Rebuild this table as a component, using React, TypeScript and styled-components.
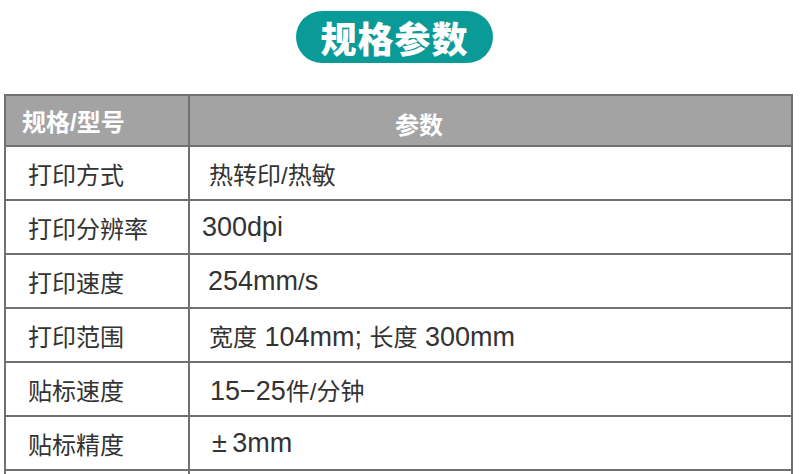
import { Fragment } from "react";
import styled, { createGlobalStyle } from "styled-components";

const GlobalStyle = createGlobalStyle`
  html, body {
    margin: 0;
    padding: 0;
    background: #ffffff;
  }
  body {
    font-family: "Liberation Sans", "Noto Sans CJK SC", sans-serif;
  }
`;

const Page = styled.div`
  width: 800px;
  height: 474px;
  overflow: hidden;
  background: #ffffff;
  display: flex;
  flex-flow: column nowrap;
`;

const TitleBar = styled.div`
  flex-shrink: 0;
  display: flex;
  justify-content: center;
  padding: 11px 11px 0 0;
  height: 94px;
  box-sizing: border-box;
`;

const TitlePill = styled.div`
  width: 197px;
  height: 52px;
  border-radius: 26px;
  background: #0a9b99;
  color: #ffffff;
  display: flex;
  align-items: center;
  justify-content: center;
  font-family: "Noto Sans CJK SC", sans-serif;
  font-size: 36px;
  font-weight: 900;
  letter-spacing: 1px;
`;

const Table = styled.div`
  flex-shrink: 0;
  margin: 0 7px 0 4px;
  display: grid;
  grid-template-columns: 184px 1fr;
  border-top: 2px solid #707070;
  border-left: 2px solid #707070;
  border-right: 2px solid #707070;
`;

const HeadCell = styled.div<{ $offset: number; $drop: number }>`
  height: 51px;
  background: #a3a3a3;
  color: #ffffff;
  display: flex;
  align-items: center;
  padding: ${({ $drop, $offset }) => `${$drop}px 0 0 ${$offset}px`};
  box-sizing: border-box;
  font-family: "Liberation Sans", "Noto Sans CJK SC", sans-serif;
  font-size: 24px;
  font-weight: 700;
  border-bottom: 2px solid #707070;
  &:first-child {
    border-right: 2px solid #707070;
  }
`;

const LabelCell = styled.div`
  height: 54px;
  box-sizing: border-box;
  display: flex;
  align-items: center;
  padding-left: 22px;
  color: #333333;
  font-size: 24px;
  border-bottom: 2px solid #707070;
  border-right: 2px solid #707070;
`;

const ValueCell = styled.div<{ $indent: number }>`
  height: 54px;
  box-sizing: border-box;
  display: flex;
  align-items: center;
  padding-left: ${({ $indent }) => $indent}px;
  color: #333333;
  font-size: 24px;
  border-bottom: 2px solid #707070;
  white-space: pre;
`;

// latin runs sit a little larger than the CJK glyphs in the reference
const Latin = styled.span`
  font-size: 27px;
`;

const rows = [
  { label: "打印方式", value: "热转印/热敏", indent: 19 },
  { label: "打印分辨率", value: "300dpi", indent: 12 },
  { label: "打印速度", value: "254mm/s", indent: 18 },
  { label: "打印范围", value: "宽度 104mm; 长度 300mm", indent: 19 },
  { label: "贴标速度", value: "15−25件/分钟", indent: 20 },
  { label: "贴标精度", value: "±\u20093mm", indent: 22 },
  { label: "", value: "", indent: 20 },
];

function Mixed({ text }: { text: string }) {
  const parts = text.split(/([\u3000-\u9fff\uff00-\uffef/]+)/).filter(Boolean);
  return (
    <span>
      {parts.map((p, i) =>
        /[\u3000-\u9fff\uff00-\uffef/]/.test(p) ? (
          <span key={i}>{p}</span>
        ) : (
          <Latin key={i}>{p}</Latin>
        )
      )}
    </span>
  );
}

export default function App() {
  return (
    <Page>
      <GlobalStyle />
      <TitleBar>
        <TitlePill>规格参数</TitlePill>
      </TitleBar>
      <Table>
        <HeadCell $offset={16} $drop={0}>
          规格/型号
        </HeadCell>
        <HeadCell $offset={205} $drop={5}>
          参数
        </HeadCell>
        {rows.map((row, i) => (
          <Fragment key={i}>
            <LabelCell>{row.label}</LabelCell>
            <ValueCell $indent={row.indent}>
              <Mixed text={row.value} />
            </ValueCell>
          </Fragment>
        ))}
      </Table>
    </Page>
  );
}
